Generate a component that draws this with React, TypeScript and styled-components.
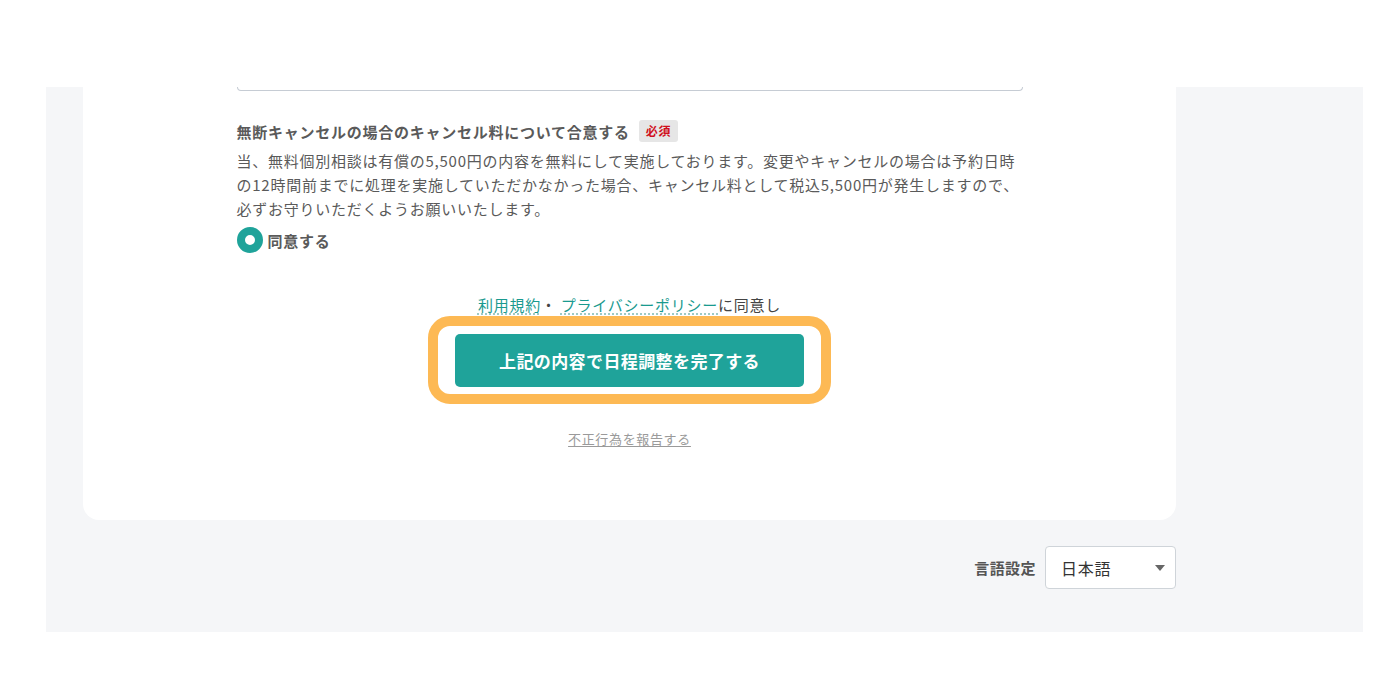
import React, { useState } from "react";
import styled, { createGlobalStyle } from "styled-components";

const GlobalStyle = createGlobalStyle`
  html, body {
    margin: 0;
    padding: 0;
    background: #ffffff;
    font-family: "Noto Sans CJK JP", "Noto Sans", sans-serif;
    color: #555555;
  }
`;

const Page = styled.div`
  width: 1380px;
  height: 692px;
  padding-top: 87px;
  box-sizing: border-box;
  background: #ffffff;
`;

const Backdrop = styled.div`
  margin-left: 46px;
  width: 1317px;
  background: #f5f6f8;
  padding: 0 0 43px 37px;
  box-sizing: border-box;
`;

const Card = styled.div`
  width: 1093px;
  background: #ffffff;
  border-radius: 0 0 16px 16px;
  padding-bottom: 71px;
  display: flex;
  flex-direction: column;
  align-items: center;
`;

const Column = styled.div`
  width: 786px;
  display: flex;
  flex-direction: column;
`;

const TextareaEdge = styled.div`
  height: 3px;
  border: 1px solid #c6ccd4;
  border-top: none;
  border-radius: 0 0 4px 4px;
`;

const LabelRow = styled.div`
  display: flex;
  align-items: center;
  gap: 9px;
  margin-top: 29px;
  height: 22px;
`;

const Label = styled.span`
  font-size: 15px;
  font-weight: 700;
  letter-spacing: 0.05em;
  color: #5a5a5a;
`;

const RequiredTag = styled.span`
  background: #e6e6e6;
  color: #d0101c;
  font-size: 12px;
  font-weight: 700;
  letter-spacing: 0.05em;
  padding: 0 7px;
  height: 22px;
  line-height: 22px;
  border-radius: 3px;
`;

const Note = styled.p`
  margin: 7px 0 0;
  font-size: 15px;
  line-height: 24px;
  letter-spacing: 0.05em;
  color: #5a5a5a;
`;

const RadioRow = styled.label`
  display: flex;
  align-items: center;
  gap: 5px;
  margin-top: 7px;
  height: 24px;
  cursor: pointer;
`;

const Ring = styled.span<{ $checked: boolean }>`
  width: 26px;
  height: 26px;
  border-radius: 50%;
  box-sizing: border-box;
  border: ${({ $checked }) => ($checked ? "8px solid #1fa39a" : "2px solid #b7bec6")};
  background: #ffffff;
`;

const RadioText = styled.span`
  font-size: 15px;
  font-weight: 700;
  letter-spacing: 0.05em;
  color: #5a5a5a;
`;

const Agreement = styled.div`
  margin-top: 42px;
  font-size: 15px;
  line-height: 22px;
  letter-spacing: 0.05em;
  color: #444444;
  text-align: center;
`;

const TermLink = styled.a`
  color: #1a9a8f;
  text-decoration: underline dotted #7fb9b4;
  text-underline-offset: 3px;
`;

const Highlight = styled.div`
  border: 10px solid #fdb954;
  border-radius: 22px;
  padding: 8px 17px 7px;
  background: #ffffff;
`;

const SubmitButton = styled.button`
  width: 349px;
  height: 53px;
  border: none;
  border-radius: 5px;
  background: #1fa39a;
  color: #ffffff;
  font-family: inherit;
  font-size: 17px;
  font-weight: 700;
  letter-spacing: 0.4px;
  cursor: pointer;
  display: block;
`;

const ReportLink = styled.a`
  margin-top: 25px;
  font-size: 13px;
  line-height: 20px;
  letter-spacing: 0.05em;
  color: #9a9a9a;
  text-decoration: underline;
  text-underline-offset: 2px;
`;

const Footer = styled.div`
  width: 1093px;
  margin-top: 26px;
  display: flex;
  justify-content: flex-end;
  align-items: center;
  gap: 9px;
`;

const FooterLabel = styled.span`
  font-size: 15px;
  font-weight: 700;
  letter-spacing: 0.03em;
  color: #555555;
`;

const SelectBox = styled.div`
  width: 131px;
  height: 43px;
  box-sizing: border-box;
  border: 1px solid #cfd4d9;
  border-radius: 4px;
  background: #ffffff;
  display: flex;
  align-items: center;
  justify-content: space-between;
  padding: 0 10px 0 15px;
  font-size: 16px;
  letter-spacing: 0.05em;
  color: #333333;
`;

const Caret = styled.span`
  width: 0;
  height: 0;
  border-left: 5px solid transparent;
  border-right: 5px solid transparent;
  border-top: 6px solid #666666;
`;

const App: React.FC = () => {
  const [agreed, setAgreed] = useState(true);

  return (
    <Page>
      <GlobalStyle />
      <Backdrop>
        <Card>
          <Column>
            <TextareaEdge />
            <LabelRow>
              <Label>無断キャンセルの場合のキャンセル料について合意する</Label>
              <RequiredTag>必須</RequiredTag>
            </LabelRow>
            <Note>
              当、無料個別相談は有償の5,500円の内容を無料にして実施しております。変更やキャンセルの場合は予約日時の12時間前までに処理を実施していただかなかった場合、キャンセル料として税込5,500円が発生しますので、必ずお守りいただくようお願いいたします。
            </Note>
            <RadioRow onClick={() => setAgreed(!agreed)}>
              <Ring $checked={agreed} />
              <RadioText>同意する</RadioText>
            </RadioRow>
          </Column>
          <Agreement>
            <TermLink>利用規約</TermLink>・ <TermLink>プライバシーポリシー</TermLink>に同意し
          </Agreement>
          <Highlight>
            <SubmitButton>上記の内容で日程調整を完了する</SubmitButton>
          </Highlight>
          <ReportLink>不正行為を報告する</ReportLink>
        </Card>
        <Footer>
          <FooterLabel>言語設定</FooterLabel>
          <SelectBox>
            日本語
            <Caret />
          </SelectBox>
        </Footer>
      </Backdrop>
    </Page>
  );
};

export default App;
